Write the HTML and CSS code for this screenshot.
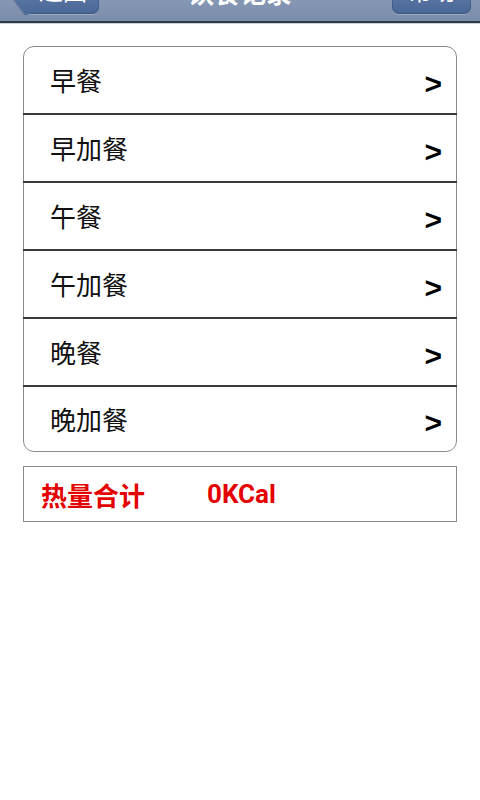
FILE: index.html
```html
<!DOCTYPE html>
<html lang="zh">
<head>
<meta charset="utf-8">
<title>饮食记录</title>
<link rel="stylesheet" href="styles.css">
</head>
<body>
<header class="navbar">
  <div class="nav-btn back"><span>返回</span></div>
  <div class="nav-title">饮食记录</div>
  <div class="nav-btn help"><span>帮助</span></div>
</header>
<main class="content">
  <ul class="meal-list">
    <li class="meal-row"><span class="meal-name">早餐</span><span class="chev">&gt;</span></li>
    <li class="meal-row"><span class="meal-name">早加餐</span><span class="chev">&gt;</span></li>
    <li class="meal-row"><span class="meal-name">午餐</span><span class="chev">&gt;</span></li>
    <li class="meal-row"><span class="meal-name">午加餐</span><span class="chev">&gt;</span></li>
    <li class="meal-row"><span class="meal-name">晚餐</span><span class="chev">&gt;</span></li>
    <li class="meal-row"><span class="meal-name">晚加餐</span><span class="chev">&gt;</span></li>
  </ul>
  <div class="total">
    <span class="total-label">热量合计</span>
    <span class="total-value">0KCal</span>
  </div>
</main>
</body>
</html>
```

FILE: styles.css
```css
html, body {
  margin: 0;
  padding: 0;
  background: #ffffff;
  font-family: Roboto, "Noto Sans CJK SC", sans-serif;
  width: 480px;
  height: 800px;
  overflow: hidden;
}

.navbar {
  height: 60px;
  margin-top: -39px;
  background: linear-gradient(#a7b6cc, #8799b5 60%, #7a8cab);
  border-bottom: 2px solid #2f3a48;
  box-shadow: 0 1px 0 #cdd2d8;
  display: flex;
  align-items: center;
  justify-content: space-between;
  padding: 0 9px 0 25px;
  position: relative;
}

.nav-btn {
  height: 44px;
  margin-top: 1px;
  background: linear-gradient(#6d88b4, #4a6796);
  border-radius: 7px;
  color: #ffffff;
  font-size: 24px;
  font-family: "Noto Sans CJK SC", sans-serif;
  display: flex;
  align-items: center;
  justify-content: center;
  box-shadow: 0 1px 0 rgba(255,255,255,0.25), inset 0 0 0 1px rgba(40,60,100,0.35);
  position: relative;
}

.nav-btn span {
  position: relative;
  top: -2px;
  z-index: 1;
}

.back {
  width: 72px;
  padding-left: 2px;
}

.back::before {
  content: "";
  position: absolute;
  left: -14px;
  top: 6px;
  width: 31px;
  height: 31px;
  background: linear-gradient(135deg, #6d88b4, #4a6796);
  transform: rotate(45deg) skew(8deg, 8deg);
  border-radius: 3px 3px 3px 6px;
  box-shadow: -1px 1px 0 rgba(40,60,100,0.3);
}

.help {
  width: 79px;
}

.nav-title {
  color: #ffffff;
  font-size: 26px;
  font-weight: bold;
  font-family: "Noto Sans CJK SC", sans-serif;
  position: absolute;
  left: 0;
  right: 0;
  text-align: center;
  top: 12px;
  pointer-events: none;
}

.content {
  padding: 23px 23px 0 23px;
}

.meal-list {
  list-style: none;
  margin: 0;
  padding: 0;
  border: 1px solid #8c8c8c;
  border-radius: 11px;
}

.meal-row {
  height: 66px;
  display: flex;
  align-items: center;
  justify-content: space-between;
  padding: 0 15px 0 27px;
  border-bottom: 2px solid #3a3a3a;
  margin: 0 -1px;
}

.meal-row:last-child {
  border-bottom: none;
  height: 64px;
}

.meal-name {
  font-family: "Noto Sans CJK SC", sans-serif;
  font-size: 26px;
  color: #111111;
  position: relative;
  top: -1px;
}

.chev {
  font-family: "Liberation Sans", sans-serif;
  font-weight: bold;
  font-size: 30px;
  color: #000000;
  position: relative;
  top: 4px;
}

.total {
  margin-top: 14px;
  height: 54px;
  border: 1px solid #8c8c8c;
  display: flex;
  align-items: center;
  padding-left: 17px;
  color: #e50000;
  font-weight: bold;
  font-size: 26px;
}

.total-label {
  font-family: "Noto Sans CJK SC", sans-serif;
  width: 166px;
}

.total-value {
  font-family: Roboto, sans-serif;
}
```
